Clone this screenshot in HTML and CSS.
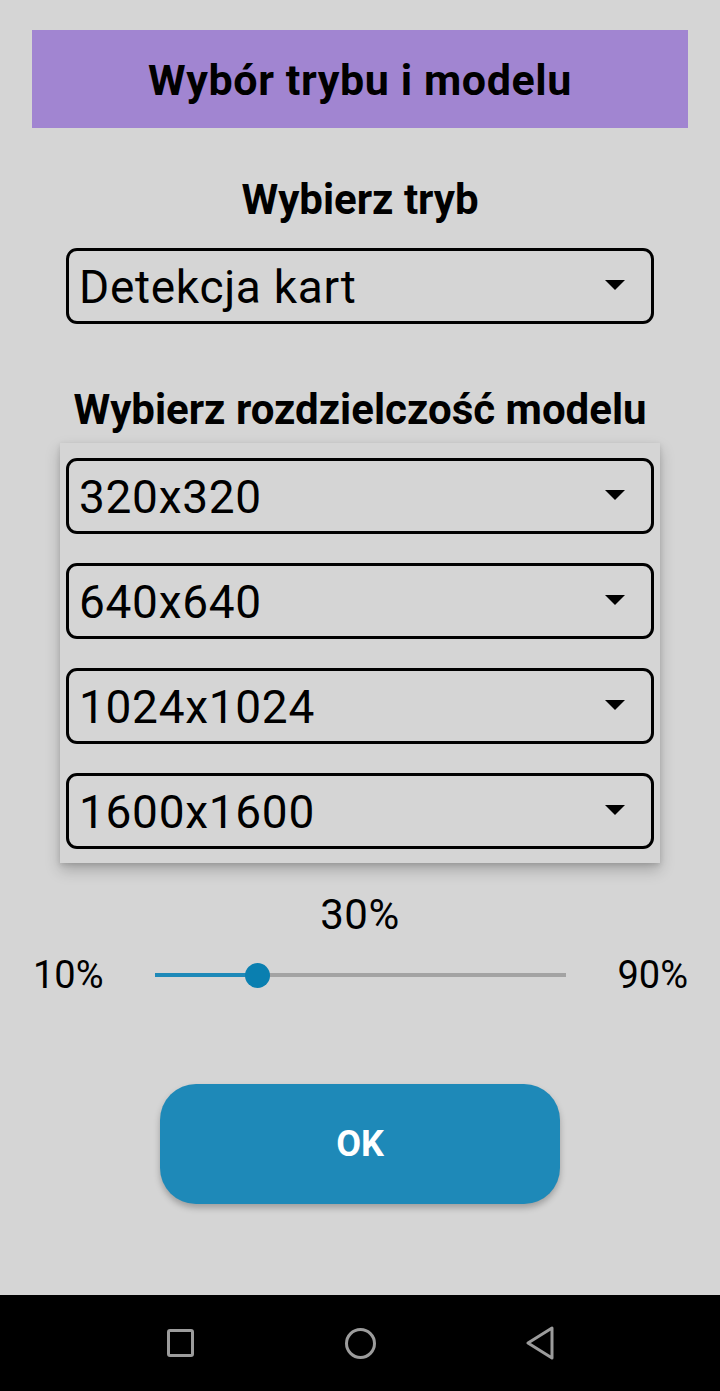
FILE: index.html
```html
<!DOCTYPE html>
<html lang="pl">
<head>
<meta charset="utf-8">
<title>Wybór trybu i modelu</title>
<link rel="stylesheet" href="styles.css">
</head>
<body>
<div class="screen">
  <main class="content">
    <header class="title-bar"><h1 class="title">Wybór trybu i modelu</h1></header>

    <h2 class="label label-mode">Wybierz tryb</h2>
    <div class="select">
      <span class="select-text">Detekcja kart</span>
      <span class="caret"></span>
    </div>

    <h2 class="label label-res">Wybierz rozdzielczość modelu</h2>
    <div class="select-wrap">
      <div class="select">
        <span class="select-text">320x320</span>
        <span class="caret"></span>
      </div>
      <div class="popup">
        <div class="select"><span class="select-text">320x320</span><span class="caret"></span></div>
        <div class="select"><span class="select-text">640x640</span><span class="caret"></span></div>
        <div class="select"><span class="select-text">1024x1024</span><span class="caret"></span></div>
        <div class="select"><span class="select-text">1600x1600</span><span class="caret"></span></div>
      </div>
    </div>

    <div class="value">30%</div>
    <div class="slider-row">
      <span class="slider-label">10%</span>
      <div class="track">
        <div class="track-active" style="width:25%"></div>
        <div class="thumb" style="left:25%"></div>
      </div>
      <span class="slider-label">90%</span>
    </div>

    <div class="btn-row"><button class="ok">OK</button></div>
  </main>
  <nav class="navbar">
    <svg class="nav-icon" width="27" height="28" viewBox="0 0 27 28"><rect x="1.5" y="1.5" width="24" height="25" rx="1.5" fill="none" stroke="#9c9c9c" stroke-width="3"/></svg>
    <svg class="nav-icon" width="33" height="33" viewBox="0 0 33 33"><circle cx="16.5" cy="16.5" r="14" fill="none" stroke="#9c9c9c" stroke-width="3"/></svg>
    <svg class="nav-icon" width="32" height="34" viewBox="0 0 32 34"><path d="M28 2 L28 32 L4 17 Z" fill="none" stroke="#9c9c9c" stroke-width="3" stroke-linejoin="round"/></svg>
  </nav>
</div>
</body>
</html>
```

FILE: styles.css
```css
* { box-sizing: border-box; }
html, body { margin: 0; padding: 0; }
body {
  background: #d5d5d5;
  font-family: Roboto, "Liberation Sans", Arial, sans-serif;
  color: #000;
}
.screen {
  display: flex;
  flex-direction: column;
  height: 1391px;
}
.content {
  flex: 1;
  display: flex;
  flex-direction: column;
  padding: 30px 32px 0;
}
.title-bar {
  background: #a185d1;
  height: 98px;
  display: flex;
  align-items: center;
  justify-content: center;
}
.title {
  margin: 0;
  font-size: 43px;
  font-weight: 700;
  letter-spacing: 0.6px;
  line-height: 48px;
  padding-top: 2px;
}
.label {
  margin: 0;
  text-align: center;
  font-size: 42px;
  font-weight: 700;
  line-height: 44px;
}
.label-mode { margin-top: 50px; }
.label-res { margin-top: 64px; }
.select {
  margin: 26px 34px 0;
  height: 76px;
  border: 3px solid #000;
  border-radius: 11px;
  display: flex;
  align-items: center;
  justify-content: space-between;
  padding: 0 26px 0 10px;
}
.select-text {
  font-size: 46px;
  letter-spacing: 0.7px;
  line-height: 52px;
  padding-top: 2px;
}
.caret {
  width: 0;
  height: 0;
  border-left: 10px solid transparent;
  border-right: 10px solid transparent;
  border-top: 10px solid #000;
  margin-top: -2px;
}
.select-wrap {
  position: relative;
}
.popup {
  position: absolute;
  left: 28px;
  right: 28px;
  top: 11px;
  background: #d5d5d5;
  padding: 15px 6px 14px;
  display: flex;
  flex-direction: column;
  gap: 29px;
  box-shadow: 0 7px 14px rgba(0,0,0,0.22), 0 2px 5px rgba(0,0,0,0.12);
}
.popup .select { margin: 0; }
.value {
  margin-top: 359px;
  text-align: center;
  font-size: 42px;
  letter-spacing: 0.5px;
  line-height: 44px;
}
.slider-row {
  margin-top: 18px;
  display: flex;
  align-items: center;
  gap: 51px;
  padding-left: 1px;
  height: 40px;
}
.slider-label {
  font-size: 38px;
  line-height: 40px;
}
.track {
  flex: 1;
  height: 4px;
  background: #a3a3a3;
  position: relative;
}
.track-active {
  height: 100%;
  background: #1e89b8;
}
.thumb {
  position: absolute;
  top: 50%;
  width: 25px;
  height: 25px;
  margin: -12.5px 0 0 -12.5px;
  border-radius: 50%;
  background: #0a7fb0;
}
.btn-row {
  margin-top: 89px;
  display: flex;
  justify-content: center;
}
.ok {
  width: 400px;
  height: 120px;
  border: none;
  border-radius: 36px;
  background: #1e89b8;
  color: #fff;
  font-family: Roboto, "Liberation Sans", Arial, sans-serif;
  font-size: 36px;
  font-weight: 700;
  box-shadow: 0 4px 6px rgba(0,0,0,0.25);
}
.navbar {
  height: 96px;
  background: #000;
  display: grid;
  grid-template-columns: repeat(3, 180px);
  justify-content: center;
  justify-items: center;
  align-items: center;
}
.nav-icon { display: block; }
```
